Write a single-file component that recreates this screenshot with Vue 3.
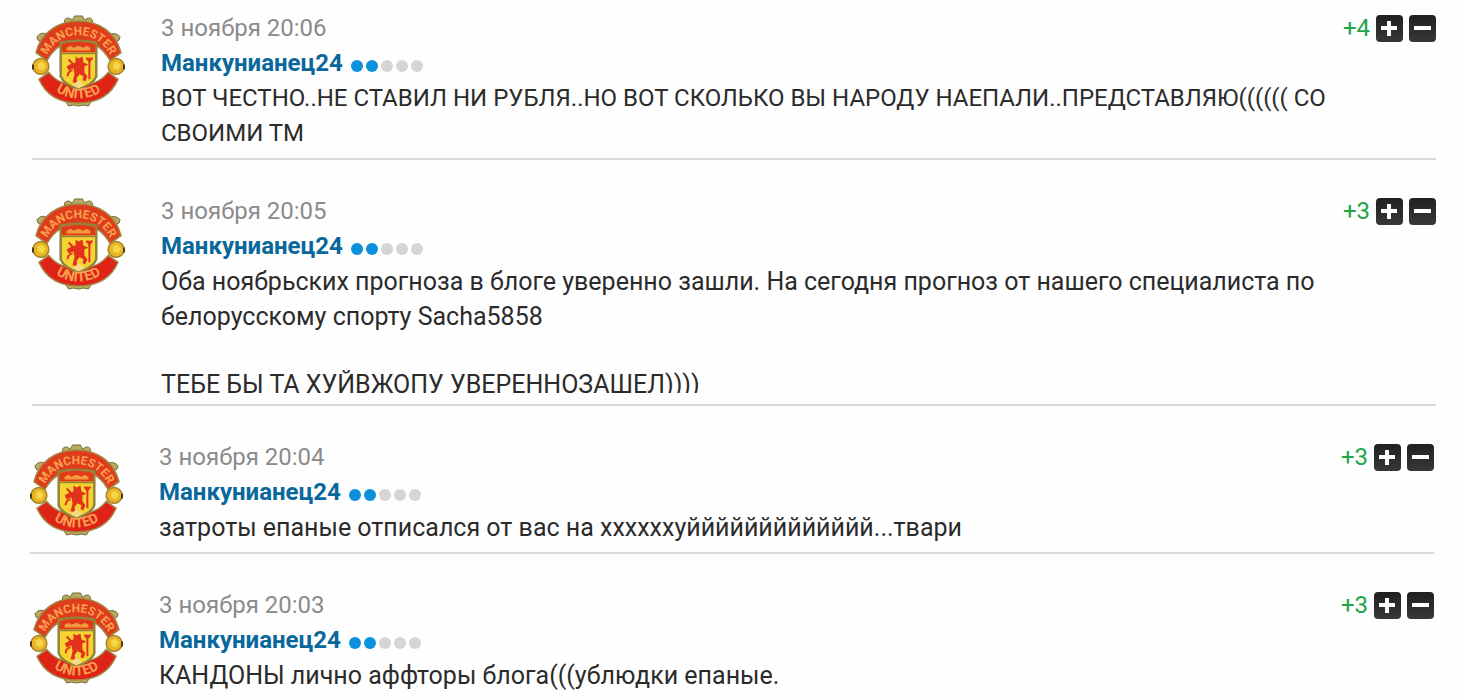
<template>
  <main class="comments">
    <article
      v-for="item in comments"
      :key="item.id"
      class="comment"
      :class="{ outer: item.outer, compact: item.tail, caps: item.caps }"
    >
      <svg class="avatar" viewBox="0 0 94 94" role="img" aria-label="Manchester United">
        <defs>
          <path :id="`top-${item.id}`" d="M13 47 A35 35 0 0 1 81 47" />
          <path :id="`bottom-${item.id}`" d="M18 72 A40 40 0 0 0 76 72" />
        </defs>
        <!-- завитки по краю -->
        <g fill="#b9ac62" stroke="#716a32" stroke-width="1">
          <path d="M33 8 q-1 -5 4 -5 l4 2 2 -4 h8 l2 4 4 -2 q5 0 4 5 z" />
          <path d="M5 22 q4 -5 9 -3 l-5 8 q-4 -1 -4 -5z M80 19 q6 -1 9 3 q0 4 -4 5z" />
          <path d="M34 87 h26 l-3 5 -5 -1 -5 1 -5 -1 -5 1 z" />
        </g>
        <!-- ленты -->
        <path
          d="M4 38 C9 18 26 6 47 6 S85 18 90 38 L79 46 C71 32 61 26 47 26 S23 32 15 46 Z"
          fill="#df3c1c"
          stroke="#a08a48"
          stroke-width="1.5"
        />
        <path
          d="M7 65 L17 58 C24 67 34 71 47 71 S70 67 77 58 L87 65 C80 81 66 89 47 89 S14 81 7 65 Z"
          fill="#df2316"
          stroke="#a08a48"
          stroke-width="1.5"
        />
        <!-- щит -->
        <path
          d="M29 28 Q47 24 65 28 V62 Q62 70 47 75 Q32 70 29 62 Z"
          fill="#f5d431"
          stroke="#8f853c"
          stroke-width="2.5"
        />
        <path d="M30 29 Q47 25 64 29 V38 H30 Z" fill="#df3a1a" />
        <path d="M35 36 V33 l4-2 3 2 5-2 5 2 3-2 4 2 v3z" fill="#f39a3c" />
        <path d="M30 39 H64" stroke="#8f853c" stroke-width="1.5" />
        <path
          d="M44 42 l3 2 4-2 1 6 5 2 -4 2 0 6 3 4 -2 5 -3-1 1-4 -4-2 -3 4 1 5 -5-1 2-8 -1-6 -5 2 -2-4 5-3 4-1z"
          fill="#e2321e"
        />
        <path
          d="M37 45 l5 5 M58 43 v22 M55 43 l3 4 3-4 M36 62 q0-5 5-6"
          fill="none"
          stroke="#e2321e"
          stroke-width="2"
        />
        <path d="M41 71 l6-5 6 5 -6 3z" fill="#f6d98a" />
        <!-- мячи -->
        <g fill="#eab524" stroke="#a58228" stroke-width="1.5">
          <circle cx="9" cy="52" r="8" />
          <circle cx="85" cy="52" r="8" />
        </g>
        <path
          d="M6 49 l4-2 4 4 -3 5 -5-2z M82 49 l4-2 4 4 -3 5 -5-2z"
          fill="#f5d64a"
        />
        <path d="M1 50 v5 M93 50 v5" stroke="#4c3b18" stroke-width="2" />
        <text class="ribbon-text">
          <textPath :href="`#top-${item.id}`" startOffset="50%">MANCHESTER</textPath>
        </text>
        <text class="ribbon-text bottom">
          <textPath :href="`#bottom-${item.id}`" startOffset="50%">UNITED</textPath>
        </text>
      </svg>

      <div class="content">
        <header class="head">
          <time class="date">{{ item.date }}</time>
          <div class="vote">
            <span class="score">{{ item.score }}</span>
            <button type="button" class="vote-btn" aria-label="Плюс" @click="vote(item, 1)">
              <svg viewBox="0 0 27 27"><path d="M13 6 v15 M5 13 h16" /></svg>
            </button>
            <button type="button" class="vote-btn" aria-label="Минус" @click="vote(item, -1)">
              <svg viewBox="0 0 27 27"><path d="M5 13 h17" /></svg>
            </button>
          </div>
        </header>
        <div class="author">
          <a href="#">Манкунианец24</a>
          <span class="rating">
            <i v-for="n in 5" :key="n" class="dot" :class="{ active: n <= 2 }"></i>
          </span>
        </div>
        <p class="text">{{ item.text }}</p>
        <p v-if="item.tail" class="text tail">{{ item.tail }}</p>
      </div>
    </article>
  </main>
</template>

<script setup>
import { ref } from 'vue';

const comments = ref([
  {
    id: 1,
    date: '3 ноября 20:06',
    score: '+4',
    caps: true,
    text: 'ВОТ ЧЕСТНО..НЕ СТАВИЛ НИ РУБЛЯ..НО ВОТ СКОЛЬКО ВЫ НАРОДУ НАЕПАЛИ..ПРЕДСТАВЛЯЮ(((((( СО СВОИМИ ТМ',
  },
  {
    id: 2,
    date: '3 ноября 20:05',
    score: '+3',
    text: 'Оба ноябрьских прогноза в блоге уверенно зашли. На сегодня прогноз от нашего специалиста по белорусскому спорту Sacha5858',
    tail: 'ТЕБЕ БЫ ТА ХУЙВЖОПУ УВЕРЕННОЗАШЕЛ))))',
  },
  {
    id: 3,
    date: '3 ноября 20:04',
    score: '+3',
    outer: true,
    text: 'затроты епаные отписался от вас на ххххххуййййййййййййй...твари',
  },
  {
    id: 4,
    date: '3 ноября 20:03',
    score: '+3',
    outer: true,
    text: 'КАНДОНЫ лично аффторы блога(((ублюдки епаные.',
  },
]);

const vote = (item, delta) => {
  const next = Number(item.score) + delta;
  item.score = next > 0 ? `+${next}` : `${next}`;
};
</script>

<style>
body {
  margin: 0;
  background: #fefefe;
  overflow: hidden;
}
</style>

<style scoped>
.comments {
  font-family: Roboto, 'Noto Sans', sans-serif;
  font-size: 25px;
  line-height: 35px;
  color: #2b2b2b;
}

.comment {
  display: flex;
  gap: 36px;
  margin: 0 24px 0 32px;
  padding: 34px 0 7px;
  border-bottom: 2px solid #d9d9d9;
}

.comment:first-child {
  padding-top: 11px;
}

.comment.outer {
  margin: 0 26px 0 30px;
}

.comment.compact {
  padding-bottom: 11px;
}

.comment:last-child {
  border-bottom: none;
}

.avatar {
  flex: none;
  width: 93px;
  height: 93px;
  margin-top: 4px;
}

.ribbon-text {
  font-family: Roboto, sans-serif;
  font-size: 12px;
  font-weight: 700;
  fill: #f9a14e;
  text-anchor: middle;
}

.ribbon-text.bottom {
  font-size: 14px;
}

.content {
  flex: 1;
  min-width: 0;
}

.head {
  display: flex;
  justify-content: space-between;
  font-size: 24px;
}

.date {
  color: #8b8b8b;
}

.vote {
  display: flex;
  align-items: center;
  gap: 6px;
}

.score {
  color: #20a548;
}

.vote-btn {
  width: 27px;
  height: 27px;
  padding: 0;
  border: none;
  border-radius: 4px;
  background: linear-gradient(#202020, #383838);
  cursor: pointer;
}

.vote-btn svg {
  display: block;
  fill: none;
  stroke: #fff;
  stroke-width: 4;
}

.author {
  display: flex;
  align-items: center;
  gap: 8px;
  font-size: 24px;
}

.author a {
  color: #08689c;
  font-weight: 700;
  text-decoration: none;
}

.rating {
  display: flex;
  gap: 3px;
  padding-top: 4px;
}

.dot {
  width: 12px;
  height: 12px;
  border-radius: 50%;
  background: #d5d5d5;
}

.dot.active {
  background: #0b91dc;
}

.text {
  margin: 0;
  padding-right: 80px;
  overflow-wrap: break-word;
}

.caps .text {
  font-size: 24px;
}

.tail {
  height: 26px;
  margin-top: 33px;
  overflow: hidden;
}
</style>
